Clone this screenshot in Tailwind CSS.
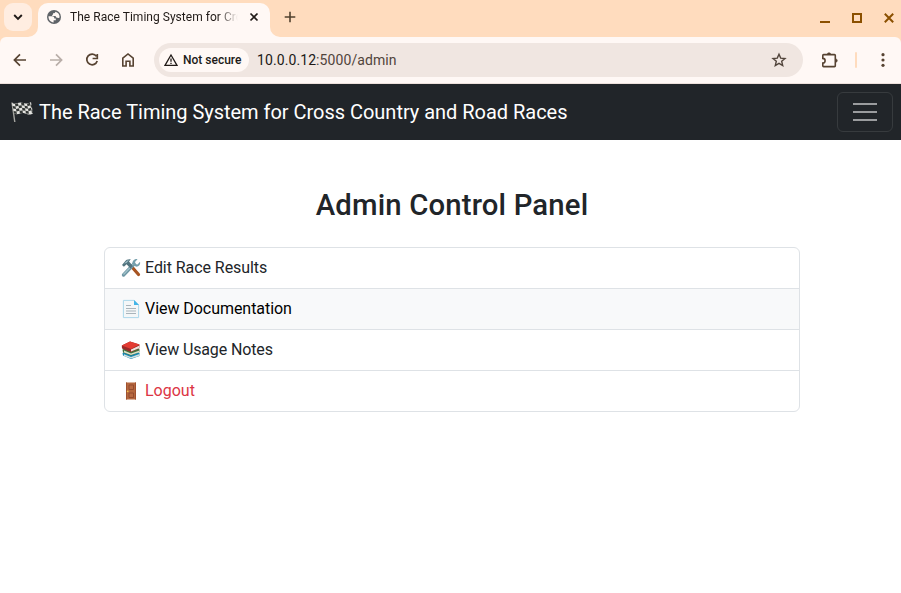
<!DOCTYPE html>
<html lang="en">
<head>
<meta charset="utf-8">
<title>The Race Timing System for Cross Country and Road Races</title>
<script src="https://cdn.jsdelivr.net/npm/@tailwindcss/browser@4"></script>
</head>
<body class="h-[593px] w-[901px] overflow-hidden bg-white font-[Roboto,sans-serif] text-[#212529]">
<header class="flex h-[37px] bg-[#ffdcbe]">
  <button class="ml-1 mt-[3px] flex size-7 items-center justify-center rounded-[9px] bg-[#ffede1]">
    <svg class="size-4" viewBox="0 0 16 16" fill="none" stroke="#201a17" stroke-width="1.9"><path d="M4.2 6l3.8 3.8L11.800 6"/></svg>
  </button>
  <div class="relative ml-[6px] mt-[3px] flex h-[34px] w-[232px] items-center rounded-t-[10px] bg-[#fff8f5] pb-[6px]">
    <svg class="absolute -left-[10px] bottom-0 size-[10px]" viewBox="0 0 10 10"><path d="M10 0v10H0A10 10 0 0 0 10 0" fill="#fff8f5"/></svg>
    <svg class="absolute -right-[10px] bottom-0 size-[10px]" viewBox="0 0 10 10"><path d="M0 0v10h10A10 10 0 0 1 0 0" fill="#fff8f5"/></svg>
    <svg class="ml-[9px] size-[14px] shrink-0" viewBox="0 0 14 14"><circle cx="7" cy="7" r="7" fill="#5f6368"/><path d="M1.500 6.300H5.200C6.700 6.300 7.300 7.200 7.300 8.500H8.800V10.200H6.600V12.400C3.500 12.300 1.300 9.700 1.500 6.300M8.400 1.700C8.300 3 7.500 3.200 6 3.200V4.800H5.200V6.100H8.600C9 7.500 9.400 8 11.700 8C12.200 8 12.500 7.700 12.600 7C12.700 4.400 10.900 2.200 8.400 1.700" fill="#fff8f5"/></svg>
    <span class="ml-[9px] w-[168px] overflow-hidden whitespace-nowrap text-[12px] leading-4 tracking-[0.03px] text-[#201a17] [mask-image:linear-gradient(to_right,#000_148px,transparent_168px)]">The Race Timing System for Cross Country and Road Races</span>
    <svg class="ml-[11px] size-[10px] shrink-0" viewBox="0 0 10 10" stroke="#201a17" stroke-width="1.700"><path d="M1.500 1.500l7 7m0-7l-7 7"/></svg>
  </div>
  <svg class="ml-[14px] mt-[11px] size-3" viewBox="0 0 12 12" stroke="#51412f" stroke-width="1.600"><path d="M6 .7v10.600M.7 6h10.600"/></svg>
  <div class="ml-auto mr-[7px] mt-[13px] flex h-[10px] gap-[22px]">
    <svg class="h-[10px] w-[10px]" viewBox="0 0 10 10"><path d="M0 8h10v2H0z" fill="#8b5000"/></svg>
    <svg class="h-[10px] w-[10px]" viewBox="0 0 10 10" fill="none" stroke="#8b5000" stroke-width="2"><path d="M1 1h8v8H1z"/></svg>
    <svg class="h-[10px] w-[10px]" viewBox="0 0 10 10" stroke="#8b5000" stroke-width="2"><path d="M.8.8l8.400 8.400m0-8.400L.8 9.200"/></svg>
  </div>
</header>
<div class="bg-[#ffdcbe]">
<div class="flex h-[47px] items-center rounded-t-[6px] border-b border-[#ede0db] bg-[#fff8f5] text-[#51443b]">
  <svg class="ml-3 size-4" viewBox="0 0 16 16" fill="none" stroke="#574332" stroke-width="1.700"><path d="M14 8H3M8 2.400L2.400 8L8 13.600"/></svg>
  <svg class="ml-5 size-4" viewBox="0 0 16 16" fill="none" stroke="#b9aea8" stroke-width="1.700"><path d="M2 8h11M8 2.400L13.600 8L8 13.600"/></svg>
  <svg class="ml-5 size-4" viewBox="0 0 16 16" fill="none" stroke="#574332" stroke-width="1.700"><path d="M12.400 4.300A5.300 5.300 0 1 0 13.200 9M13.300 2v4.500H8.600"/></svg>
  <svg class="ml-5 size-4" viewBox="0 0 16 16" fill="none" stroke="#574332" stroke-width="1.600"><path d="M2.800 6.200L8 2l5.200 4.200V14H9.900V9.200H6.100V14H2.800z"/></svg>
  <div class="ml-[18px] flex h-[34px] w-[649px] items-center rounded-full bg-[#f0e6e1]">
    <div class="ml-[5px] flex h-6 w-[90px] items-center rounded-full bg-[#fff8f5]">
      <svg class="ml-[5px] size-[14px]" viewBox="0 0 14 14" fill="none" stroke="#201a17" stroke-width="1.300"><path d="M7 2L13 12.300H1z"/><path d="M7 5.600v3.200M7 9.700v1.300"/></svg>
      <span class="ml-[5px] whitespace-nowrap text-[12px] font-medium leading-4 text-[#201a17]">Not secure</span>
    </div>
    <span class="ml-2 text-[14px] leading-5 tracking-[0.09px] text-[#51443b]"><span class="text-[#201a17]">10.0.0.12</span>:5000/admin</span>
    <svg class="ml-auto mr-4 size-4" viewBox="0 0 16 16" fill="none" stroke="#51443b" stroke-width="1.400"><path d="M8 2.200L9.700 6.100L14 6.500L10.700 9.300L11.700 13.500L8 11.300L4.300 13.500L5.300 9.300L2 6.500L6.300 6.100z"/></svg>
  </div>
  <svg class="ml-[18px] size-[18px]" viewBox="0 0 18 18" fill="none" stroke="#574332" stroke-width="1.600"><path d="M2.600 3.600H13.500a.8.800 0 0 1 .8.800V14.800a.8.800 0 0 1-.8.800H2.600a.8.800 0 0 1-.8-.8V12a2.300 2.300 0 0 0 0-4.600V4.400A.8.800 0 0 1 2.600 3.600z"/><path d="M6.300 3.400a1.700 1.700 0 0 1 3.400 0zM14.600 7.900a1.700 1.700 0 0 1 0 3.400z" fill="#574332" stroke-width=".6"/></svg>
  <span class="ml-4 h-4 w-[2px] rounded bg-[#ffdcbe]"></span>
  <svg class="ml-[18px] size-4" viewBox="0 0 16 16" fill="#574332"><circle cx="8" cy="2.700" r="1.600"/><circle cx="8" cy="8" r="1.600"/><circle cx="8" cy="13.300" r="1.600"/></svg>
</div>
</div>
<nav class="flex h-14 items-center bg-[#212529] pl-[11px] pr-2">
  <svg class="size-[22px]" viewBox="0 0 22 22">
    <path d="M1 1.500L3.800 21" stroke="#a5a5a0" stroke-width="1.400"/>
    <path d="M1 2C5 4 7 .8 11 1.700S17 3 20 1L22 12.500C18 15 16 12.500 12.500 12S7 14.500 3 12.500z" fill="#e4e4e0"/>
    <path d="M4 3l3-.7.500 2.400-3 .7zM10 1.600l3 .5.500 2.600-3-.5zM16 2.700l3-1 .5 2.500-3 1zM1.600 5l2.900.4.500 2.600-2.900-.4zM7.500 4.700l3-.5.500 2.600-3 .5zM13.500 4.700l3 .5.500 2.500-3-.4zM19.500 4.200l1.300-.6.500 2.600-1.300.6zM5 8l3-.7.500 2.500-3 .6zM11 6.800l3 .5.500 2.500-3-.4zM17 7.700l3-1 .5 2.500-3 1zM2.600 10l2.900.4.400 2.500-2.900-.4zM8.500 9.800l3-.4.400 2.500-3 .5zM14.500 9.800l3 .4.400 2.500-3-.3zM20.500 9.200l1.100-.6.400 3.500-1 .4z" fill="#333735"/>
  </svg>
  <span class="ml-[6px] whitespace-nowrap text-[20px] leading-[30px] tracking-[-0.025px] text-white">The Race Timing System for Cross Country and Road Races</span>
  <button class="ml-auto flex h-10 w-14 items-center justify-center rounded-md border border-[#373b3e]">
    <svg class="size-[30px]" viewBox="0 0 30 30" stroke="#fff" stroke-opacity=".55" stroke-linecap="butt" stroke-width="2"><path d="M3 7h24M3 15h24M3 23h24"/></svg>
  </button>
</nav>
<main class="ml-[104px] w-[696px] pt-12">
  <h2 class="text-center text-[29.300px] font-medium leading-[35px] tracking-[0.16px]">Admin Control Panel</h2>
  <div class="mt-6 divide-y divide-[#dee2e6] overflow-hidden rounded-md border border-[#dee2e6] text-base leading-6">
    <a class="flex h-[41px] items-center pl-4">
      <svg class="size-5" viewBox="0 0 20 20"><path d="M10.500 8.500L17.500 16.500" stroke="#a75422" stroke-width="3.200" stroke-linecap="round"/><path d="M2.500 17L13 6" stroke="#6e97a5" stroke-width="3.400" stroke-linecap="round"/><path d="M2.500 16.500L13 5.500" stroke="#a2c3cb" stroke-width="1.200"/><path d="M16.500 1.200L14 4l.5 2 2 .4L19 3.800c.8 3-1.600 5.400-4.300 4.800L11.500 6C11 3 13.500.6 16.500 1.200" fill="#75a0ad"/><path d="M1 7l2.500-3C5 1.500 7 1 9.800 1.200L8 3.500l4 4.600-2.600 2.500-3.800-4.400-2.700 2.600z" fill="#52747f"/><path d="M3 5.500L6.300 2.500 8 2.200 5.500 5z" fill="#9dbcc6"/></svg>
      <span class="ml-1 tracking-[-0.06px]">Edit Race Results</span>
    </a>
    <a class="flex h-[41px] items-center bg-[#f8f9fa] pl-4 text-black">
      <svg class="size-5" viewBox="0 0 20 20"><path d="M2.400 1.400h10.800l4.400 4.400v12.800H2.400z" fill="#f4f7f8" stroke="#acd7ea" stroke-width="1"/><path d="M13 1l5 5h-5z" fill="#42b5e8"/><path d="M5 6.500h5M5 9.500h10M5 12h10M5 14.500h10" stroke="#a9b4bb" stroke-width="1"/></svg>
      <span class="ml-1 tracking-[-0.05px]">View Documentation</span>
    </a>
    <a class="flex h-[41px] items-center pl-4">
      <svg class="size-5" viewBox="0 0 20 20"><path d="M1.500 13l8-3.500 9 3.500v3l-8.500 3-8-3.500z" fill="#1687b2"/><path d="M3 14.200l7 2.800 8.500-3v2L10 18.500 3 16z" fill="#d3e0de"/><path d="M1.500 9.500l8-3 9 2.800v2.900L10 15.500l-8-3z" fill="#446f3b"/><path d="M3 10.500l7 3 8.500-3v1.700L10 15 3 12.500z" fill="#d9dfc8"/><path d="M.8 5.500L9 1.500l9.500 3v3.800L10 12 1 8.500z" fill="#9c2929"/><path d="M10 9.500l8.500-4v2.500L10 11.500z" fill="#ece5dd"/><path d="M.8 5.500L9 1.500l9.500 3L10 9z" fill="#e33b32"/></svg>
      <span class="ml-1 tracking-[-0.13px]">View Usage Notes</span>
    </a>
    <a class="flex h-10 items-center pl-4 text-[#dc3545]">
      <svg class="size-5" viewBox="0 0 20 20"><path d="M5 1.500h10v17H5z" fill="#b5683f"/><path d="M5.500 1.500v17M14.500 1.500v17" stroke="#a0512f"/><path d="M8 4h4.500v4.500H8zM8 12h4.500v4.500H8z" fill="#b86a42" stroke="#8b452b" stroke-width=".8"/><circle cx="6.700" cy="10.300" r=".9" fill="#f4c54e"/></svg>
      <span class="ml-1">Logout</span>
    </a>
  </div>
</main>
</body>
</html>
